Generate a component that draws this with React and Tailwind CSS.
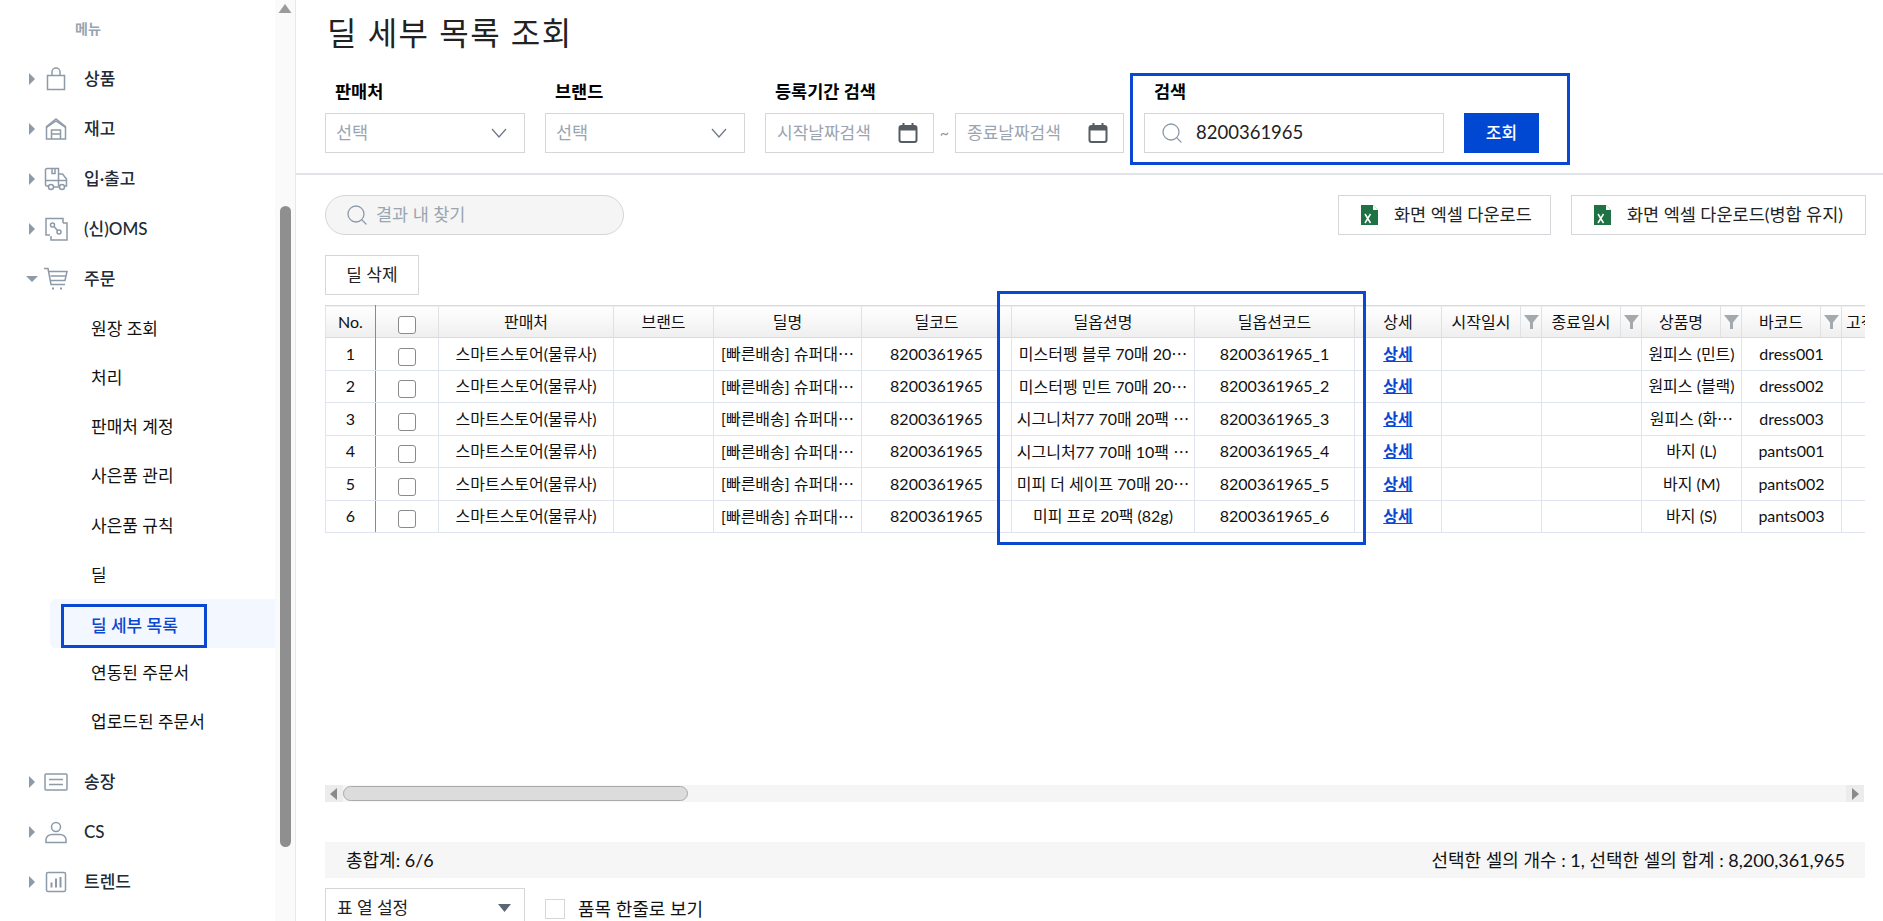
import { Search } from 'lucide-react';

const menuTop = [
  { label: '상품', icon: 'bag' },
  { label: '재고', icon: 'house' },
  { label: '입·출고', icon: 'truck' },
  { label: '(신)OMS', icon: 'oms' },
];
const subMenu = ['원장 조회', '처리', '판매처 계정', '사은품 관리', '사은품 규칙', '딜', '딜 세부 목록', '연동된 주문서', '업로드된 주문서'];
const menuBottom = [
  { label: '송장', icon: 'list' },
  { label: 'CS', icon: 'user' },
  { label: '트렌드', icon: 'chart' },
];

const rows = [
  { no: 1, option: '미스터펭 블루 70매 20', code: '8200361965_1', product: '원피스 (민트)', barcode: 'dress001' },
  { no: 2, option: '미스터펭 민트 70매 20', code: '8200361965_2', product: '원피스 (블랙)', barcode: 'dress002' },
  { no: 3, option: '시그니처77 70매 20팩 ', code: '8200361965_3', product: '원피스 (화', barcode: 'dress003', cut: true },
  { no: 4, option: '시그니처77 70매 10팩 ', code: '8200361965_4', product: '바지 (L)', barcode: 'pants001' },
  { no: 5, option: '미피 더 세이프 70매 20', code: '8200361965_5', product: '바지 (M)', barcode: 'pants002' },
  { no: 6, option: '미피 프로 20팩 (82g)', code: '8200361965_6', product: '바지 (S)', barcode: 'pants003', full: true },
];

function MenuIcon({ name }) {
  const p = { fill: 'none', stroke: '#8d9aa8', strokeWidth: 1.5 };
  return (
    <svg width="24" height="24" viewBox="0 0 24 24">
      {name === 'bag' && <g {...p}><path d="M3.5 8.5h17v14h-17z" /><path d="M8 8.500V5a4 4 0 0 1 8 0v3.500" /></g>}
      {name === 'house' && <g {...p}><path d="M2.500 22V9.500L12 2l9.500 7.500V22z" /><path d="M2.500 10.500 12 4l9.500 6.500" /><path d="M7.500 22v-9h9v9" /><path d="M7.500 17h9" /></g>}
      {name === 'truck' && <g {...p}><path d="M4.500 19H3a1.500 1.500 0 0 1-1.500-1.500V3A1.500 1.500 0 0 1 3 1.500h11.500V19" /><path d="M14.500 7h4l4 5v7h-2" /><path d="M8 1.500v5h3v-5" /><path d="M1.500 13.500h21" /><circle cx="7" cy="20" r="2.500" /><circle cx="18" cy="20" r="2.500" /><path d="M9.500 20h6" /></g>}
      {name === 'oms' && <g {...p}><path d="M6 18H2V1.500h17V6" /><path d="M19 6h4v17H7v-4" /><circle cx="8.500" cy="8" r="2" /><circle cx="15" cy="15" r="2" /><path d="m10 9.500 3.500 4" /></g>}
      {name === 'cart' && <g {...p}><path d="M0 1.500h4l3 16h14" /><path d="M4.500 4.500H23l-2 9H6.500" /><path d="M6.500 9h15" /><path d="M8 21.500h2M16 21.500h2" strokeWidth="2" /></g>}
      {name === 'list' && <g {...p}><rect x="1" y="4" width="22" height="16" rx="1" /><path d="M5 9.500h14M5 14.500h14" /></g>}
      {name === 'user' && <g {...p}><circle cx="12" cy="7" r="4.500" /><path d="M2 22.500v-3c0-3 3-5 6-5h8c3 0 6 2 6 5v3z" /></g>}
      {name === 'chart' && <g {...p}><rect x="2.500" y="2.500" width="19" height="19" rx="1.500" /><path d="M7.500 17.500v-5M12 17.500v-9M16.500 17.500V7" strokeWidth="2" /></g>}
    </svg>
  );
}

function Caret({ open }) {
  return (
    <svg width="14" height="14" viewBox="0 0 14 14" className="shrink-0">
      {open ? <path d="M1 4h12L7 10z" fill="#8d9aa8" /> : <path d="M4 1l6 6-6 6z" fill="#8d9aa8" />}
    </svg>
  );
}

function TopMenu({ label, icon, open }) {
  return (
    <div className="flex h-[50px] items-center pl-[25px]">
      <Caret open={open} />
      <div className="ml-[5px] flex w-[24px] justify-center"><MenuIcon name={icon} /></div>
      <span className="ml-[16px] text-[17px] font-medium text-[#222b36]">{label}</span>
    </div>
  );
}

function Sidebar() {
  return (
    <aside className="flex h-full w-[296px] shrink-0 border-r border-[#e6e8eb] bg-white">
      <div className="w-[275px]">
        <div className="flex h-[54px] items-end pb-[15px] pl-[75px] text-[14px] font-bold text-[#98a4b1]">메뉴</div>
        {menuTop.map((m) => <TopMenu key={m.label} {...m} />)}
        <TopMenu label="주문" icon="cart" open />
        {subMenu.map((s) => (
          <div key={s} className="flex h-[49.2px] items-center">
            {s === '딜 세부 목록' ? (
              <div className="ml-[50px] flex h-[49px] w-[225px] items-end rounded-l-md bg-[#f3f7ff]">
                <div className="ml-[11px] flex h-[44px] w-[146px] items-center border-[3px] border-[#0a48d1] pl-[27px] text-[17px] font-medium text-[#0a48d1]">{s}</div>
              </div>
            ) : (
              <span className="pl-[91px] text-[17px] text-[#111]">{s}</span>
            )}
          </div>
        ))}
        <div className="h-[10px]" />
        {menuBottom.map((m) => <TopMenu key={m.label} {...m} />)}
      </div>
      <div className="flex w-[20px] flex-col items-center bg-[#fafafa]">
        <svg width="14" height="10" viewBox="0 0 14 10" className="mt-[4px]"><path d="M7 0l6.500 9H.500z" fill="#9a9a9a" /></svg>
        <div className="mt-[192px] h-[641px] w-[11px] rounded-full bg-[#8f8f8f]" />
      </div>
    </aside>
  );
}

function Label({ children }) {
  return <div className="flex h-[20px] items-center pl-[10px] text-[17.500px] font-bold leading-none text-black">{children}</div>;
}

function SelectBox({ label }) {
  return (
    <div className="w-[200px]">
      <Label>{label}</Label>
      <div className="mt-[11px] flex h-[40px] items-center justify-between border border-[#d4d6d9] pl-[10px] pr-[17px] text-[17.500px] text-[#9aa5b1]">
        <span>선택</span>
        <svg width="16" height="10" viewBox="0 0 16 10"><path d="M1 1l7 8 7-8" fill="none" stroke="#6f7b88" strokeWidth="1.300" /></svg>
      </div>
    </div>
  );
}

function CalendarIcon() {
  return (
    <svg width="20" height="20" viewBox="0 0 20 20">
      <rect x="1.500" y="3" width="17" height="16" rx="2" fill="#fff" stroke="#555c63" strokeWidth="2" />
      <path d="M1.500 3h17v4.500h-17z" fill="#555c63" />
      <path d="M5.500 0v4M14.500 0v4" stroke="#555c63" strokeWidth="2" />
    </svg>
  );
}

function DateBox({ placeholder }) {
  return (
    <div className="flex h-[40px] w-[169px] items-center justify-between border border-[#d4d6d9] pl-[11px] pr-[15px] text-[17px] text-[#9aa5b1]">
      <span>{placeholder}</span>
      <CalendarIcon />
    </div>
  );
}

function ExcelIcon() {
  return (
    <svg width="19" height="20" viewBox="0 0 19 20" className="shrink-0">
      <path d="M1 0h12l5 5v15H1z" fill="#1f7244" />
      <path d="M13 0l5 5h-5z" fill="#fff" />
      <path d="M5 9l5.500 9M10.500 9L5 18" stroke="#fff" strokeWidth="1.500" />
    </svg>
  );
}

function ExcelButton({ children, className }) {
  return (
    <button className={`flex h-[40px] items-center gap-[15px] border border-[#d4d6d9] bg-white pl-[21px] text-[17.500px] text-[#222] ${className}`}>
      <ExcelIcon />
      <span>{children}</span>
    </button>
  );
}

function Funnel() {
  return (
    <svg width="15" height="14" viewBox="0 0 15 14"><path d="M0 0h15L9 7.500V14H6V7.500z" fill="#a4a9ad" /></svg>
  );
}

function HeadCell({ children, filter, className = '' }) {
  return (
    <th className={`h-[32px] border-r border-[#dfe1e4] p-0 font-normal ${className}`}>
      {filter ? (
        <div className="flex h-full items-center">
          <span className="flex-1 text-center">{children}</span>
          <span className="flex h-full w-[21px] items-center justify-center border-l border-[#dfe1e4]"><Funnel /></span>
        </div>
      ) : children}
    </th>
  );
}

function Ellipsis() {
  return <span className="font-['Noto_Sans_CJK_KR']">…</span>;
}

const cell = 'border-r border-b border-[#dfe4ee] p-0 text-center';

function DealTable() {
  return (
    <div className="relative mt-[10px] h-[480px] w-[1540px]">
      <div className="h-full w-[1540px] overflow-hidden">
        <table className="w-[1616px] table-fixed border-collapse border-l border-[#dfe4ee] text-[16px] text-[#111]">
          <colgroup>
            <col className="w-[50px]" />
            <col className="w-[63px]" />
            <col className="w-[175px]" />
            <col className="w-[100px]" />
            <col className="w-[148px]" />
            <col className="w-[150px]" />
            <col className="w-[183px]" />
            <col className="w-[160px]" />
            <col className="w-[87px]" />
            <col className="w-[100px]" />
            <col className="w-[100px]" />
            <col className="w-[100px]" />
            <col className="w-[100px]" />
            <col className="w-[100px]" />
          </colgroup>
          <thead>
            <tr className="border-y border-[#d8dadd] bg-gradient-to-b from-white to-[#efefef]">
              <HeadCell className="border-r-[#8a8a8a]">No.</HeadCell>
              <HeadCell><input type="checkbox" readOnly className="mt-[3px] h-[18px] w-[18px] appearance-none rounded-[3px] border border-[#8a8a8a] bg-white align-middle" /></HeadCell>
              <HeadCell>판매처</HeadCell>
              <HeadCell>브랜드</HeadCell>
              <HeadCell>딜명</HeadCell>
              <HeadCell>딜코드</HeadCell>
              <HeadCell>딜옵션명</HeadCell>
              <HeadCell>딜옵션코드</HeadCell>
              <HeadCell>상세</HeadCell>
              <HeadCell filter>시작일시</HeadCell>
              <HeadCell filter>종료일시</HeadCell>
              <HeadCell filter>상품명</HeadCell>
              <HeadCell filter>바코드</HeadCell>
              <HeadCell className="pl-[4px] text-left">고객명</HeadCell>
            </tr>
          </thead>
          <tbody>
            {rows.map((r) => (
              <tr key={r.no} className="h-[32.500px]">
                <td className={`${cell} border-r-[#8a8a8a]`}>{r.no}</td>
                <td className={cell}><input type="checkbox" readOnly className="mt-[3px] h-[18px] w-[18px] appearance-none rounded-[3px] border border-[#8a8a8a] bg-white align-middle" /></td>
                <td className={cell}>스마트스토어(물류사)</td>
                <td className={cell}></td>
                <td className={cell}>[빠른배송] 슈퍼대<Ellipsis /></td>
                <td className={cell}>8200361965</td>
                <td className={cell}>{r.option}{!r.full && <Ellipsis />}</td>
                <td className={cell}>{r.code}</td>
                <td className={cell}><a className="font-bold text-[#0a48d1] underline">상세</a></td>
                <td className={cell}></td>
                <td className={cell}></td>
                <td className={cell}>{r.product}{r.cut && <Ellipsis />}</td>
                <td className={cell}>{r.barcode}</td>
                <td className={cell}></td>
              </tr>
            ))}
          </tbody>
        </table>
      </div>
      <div className="pointer-events-none absolute left-[672px] top-[-14px] h-[254px] w-[369px] border-[3px] border-[#0a48d1]" />
    </div>
  );
}

function HScrollbar() {
  return (
    <div className="flex h-[17px] w-[1539px] items-center bg-[#f5f5f5]">
      <div className="flex h-full w-[18px] items-center justify-center bg-[#ececec]">
        <svg width="8" height="12" viewBox="0 0 8 12"><path d="M7 0v12L0 6z" fill="#8a8a8a" /></svg>
      </div>
      <div className="h-[15px] w-[345px] rounded-full border border-[#aaa] bg-[#dcdcdc]" />
      <div className="flex-1" />
      <div className="flex h-full w-[18px] items-center justify-center bg-[#ececec]">
        <svg width="8" height="12" viewBox="0 0 8 12"><path d="M1 0v12l7-6z" fill="#8a8a8a" /></svg>
      </div>
    </div>
  );
}

export default function App() {
  return (
    <div className="flex h-[921px] w-[1883px] overflow-hidden bg-white font-[Lato,'Noto_Sans_CJK_KR',sans-serif] text-[#111]">
      <Sidebar />

      <main className="min-w-0 flex-1">
        <div className="h-[175px] border-b-2 border-[#e0e4e8]">
          <div className="flex h-[73px] items-start pl-[31px] pt-[13px]">
            <h1 className="text-[32px] font-normal leading-[40px] tracking-[1.500px] text-[#222]">딜 세부 목록 조회</h1>
          </div>
          <div className="flex items-start pl-[29px]">
            <div className="flex gap-[20px] pt-[9px]">
              <SelectBox label="판매처" />
              <SelectBox label="브랜드" />
              <div>
                <Label>등록기간 검색</Label>
                <div className="mt-[11px] flex items-center">
                  <DateBox placeholder="시작날짜검색" />
                  <span className="w-[21px] text-center text-[16px] text-[#8a95a1]">~</span>
                  <DateBox placeholder="종료날짜검색" />
                </div>
              </div>
            </div>
            <div className="ml-[6px] h-[92px] w-[440px] border-[3px] border-[#0a48d1] pt-[6px]">
              <div className="pl-[11px]"><Label>검색</Label></div>
              <div className="mt-[11px] flex items-center gap-[20px] pl-[11px]">
                <div className="flex h-[40px] w-[300px] items-center border border-[#d4d6d9] pl-[15px] text-[18.500px] text-[#222]">
                  <Search size={24} strokeWidth={1.3} className="text-[#8d9aa8]" />
                  <span className="ml-[12px]">8200361965</span>
                </div>
                <button className="h-[40px] w-[75px] bg-[#0047d1] text-[17px] font-medium text-white">조회</button>
              </div>
            </div>
          </div>
        </div>

        <div className="pl-[29px]">
          <div className="mt-[20px] flex items-center justify-between pr-[17px]">
            <div className="flex h-[40px] w-[299px] items-center rounded-full border border-[#d4d6d9] bg-[#f5f5f5] pl-[19px] text-[17.500px] text-[#9aa5b1]">
              <Search size={24} strokeWidth={1.3} className="text-[#8d9aa8]" />
              <span className="ml-[7px]">결과 내 찾기</span>
            </div>
            <div className="flex gap-[20px]">
              <ExcelButton className="w-[213px]">화면 엑셀 다운로드</ExcelButton>
              <ExcelButton className="w-[295px]">화면 엑셀 다운로드(병합 유지)</ExcelButton>
            </div>
          </div>

          <button className="mt-[20px] block h-[40px] w-[94px] border border-[#d4d6d9] bg-white text-[17px] text-[#222]">딜 삭제</button>

          <DealTable />
          <HScrollbar />

          <div className="mt-[40px] flex h-[36px] w-[1540px] items-center justify-between bg-[#f6f6f6] pl-[21px] pr-[20px] text-[18px] text-[#111]">
            <span>총합계: 6/6</span>
            <span>선택한 셀의 개수 : 1, 선택한 셀의 합계 : 8,200,361,965</span>
          </div>

          <div className="mt-[10px] flex items-start">
            <div className="flex h-[40px] w-[200px] items-center justify-between border border-[#d4d6d9] pl-[11px] pr-[13px] text-[17px] text-[#222]">
              <span>표 열 설정</span>
              <svg width="13" height="8" viewBox="0 0 13 8"><path d="M0 0h13L6.500 8z" fill="#5d6772" /></svg>
            </div>
            <div className="ml-[20px] mt-[11px] h-[20px] w-[20px] border border-[#d4d6d9]" />
            <span className="ml-[13px] mt-[9px] text-[18px] leading-[24px] text-[#111]">품목 한줄로 보기</span>
          </div>
        </div>
      </main>
    </div>
  );
}
